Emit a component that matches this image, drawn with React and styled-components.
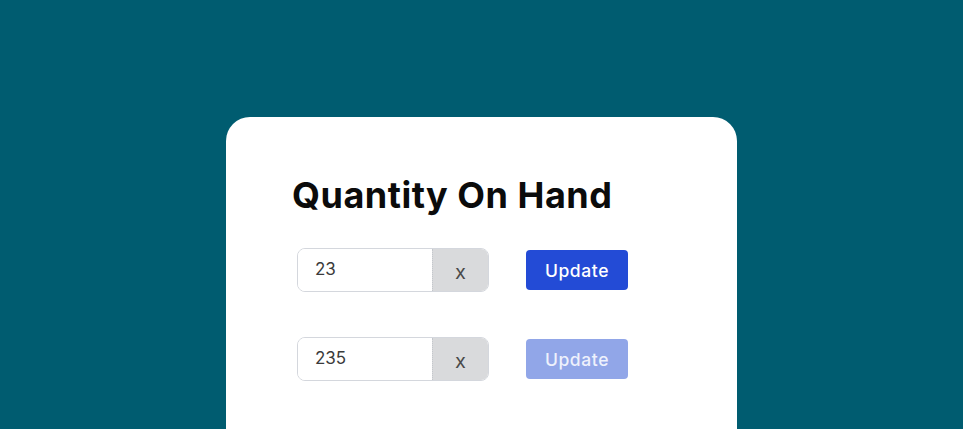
import styled, { createGlobalStyle } from 'styled-components';

const GlobalStyle = createGlobalStyle`
  html, body {
    margin: 0;
    padding: 0;
    background: #005c70;
    height: 100%;
    overflow: hidden;
  }
  body {
    font-family: Inter, "Noto Sans", sans-serif;
  }
`;

const Page = styled.div`
  display: flex;
  padding: 117px 0 0 226px;
  height: 429px;
  box-sizing: border-box;
`;

const Card = styled.div`
  width: 511px;
  height: 312px;
  background: #fff;
  border-radius: 24px 24px 0 0;
  padding: 56px 0 0 66px;
  box-sizing: border-box;
  display: flex;
  flex-direction: column;
`;

const Title = styled.h1`
  margin: 0 0 31px;
  font-size: 36px;
  line-height: 44px;
  font-weight: 700;
  color: #0b0b0b;
  letter-spacing: 0.5px;
`;

const Rows = styled.div`
  display: flex;
  flex-direction: column;
  row-gap: 45px;
  padding-left: 5px;
`;

const Row = styled.div`
  display: flex;
  align-items: center;
  column-gap: 37px;
`;

const InputGroup = styled.div`
  display: flex;
  width: 192px;
  height: 44px;
  border: 1.5px solid #d4d7dd;
  border-radius: 8px;
  overflow: hidden;
  box-sizing: border-box;
`;

const Field = styled.input`
  flex: 1;
  min-width: 0;
  border: none;
  outline: none;
  padding: 0 0 2px 17px;
  font-family: inherit;
  font-size: 17px;
  color: #3b3b3b;
  background: #fff;
`;

const Clear = styled.button`
  width: 56px;
  border: none;
  border-left: 1px dotted #c4c7cc;
  background: #d9dadc;
  color: #4a4a4a;
  font-family: inherit;
  font-size: 20px;
  padding: 4px 0 0;
  cursor: pointer;
`;

const UpdateButton = styled.button`
  width: 102px;
  height: 40px;
  border: none;
  border-radius: 4px;
  background: ${p => (p.disabled ? '#91a6e8' : '#234bd6')};
  color: ${p => (p.disabled ? '#eef1fc' : '#fff')};
  font-family: inherit;
  font-size: 17.5px;
  font-weight: 500;
  letter-spacing: 0.6px;
  cursor: ${p => (p.disabled ? 'default' : 'pointer')};
`;

const items = [
  { id: 1, qty: '23', disabled: false },
  { id: 2, qty: '235', disabled: true },
];

const App = () => (
  <>
    <GlobalStyle />
    <Page>
      <Card>
        <Title>Quantity On Hand</Title>
        <Rows>
          {items.map(item => (
            <Row key={item.id}>
              <InputGroup>
                <Field defaultValue={item.qty} />
                <Clear>x</Clear>
              </InputGroup>
              <UpdateButton disabled={item.disabled}>Update</UpdateButton>
            </Row>
          ))}
        </Rows>
      </Card>
    </Page>
  </>
);

export default App;
